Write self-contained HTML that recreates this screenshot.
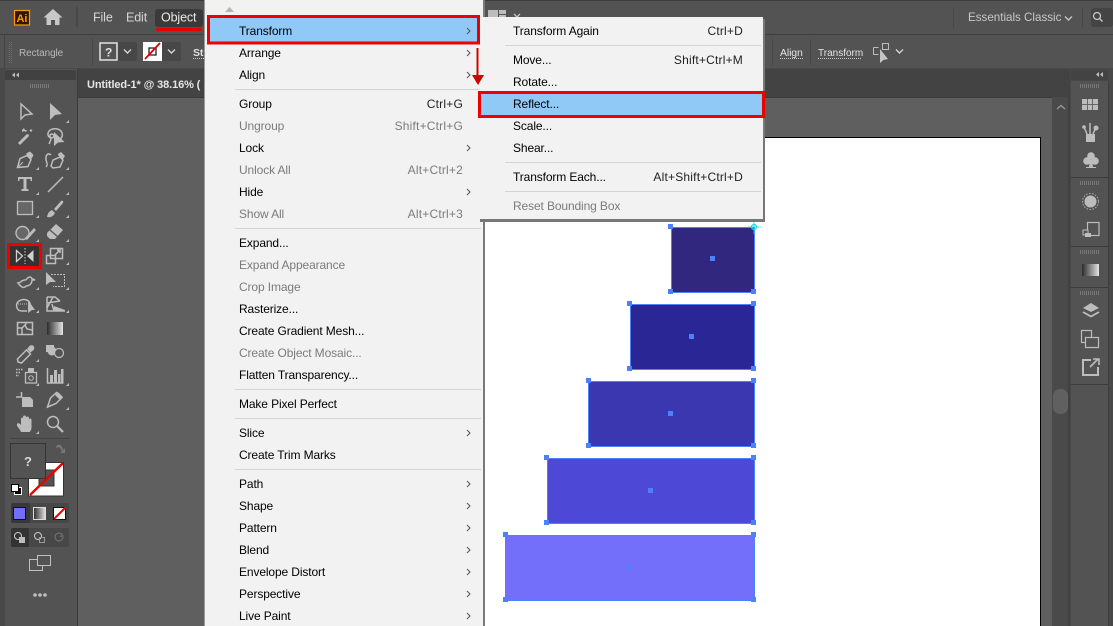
<!DOCTYPE html>
<html><head><meta charset="utf-8"><title>Illustrator Object menu</title>
<style>
html,body{margin:0;padding:0;width:1113px;height:626px;overflow:hidden;background:#535353}
svg{display:block}
text{font-family:"Liberation Sans",sans-serif;font-size:12px;fill:#000;letter-spacing:-.12px}
.g{fill:#7b7b7b}
.r{text-anchor:end;fill:#222;letter-spacing:.2px}
.rg{text-anchor:end;fill:#7b7b7b;letter-spacing:.2px}
.ic{fill:none;stroke:#bdbdbd;stroke-width:1.500}
.f{fill:#bdbdbd;stroke:none}
.h{fill:#4d80fb}
.tri{fill:#bdbdbd}
.ar{fill:none;stroke:#555;stroke-width:1}
</style></head><body>
<svg width="1113" height="626" viewBox="0 0 1113 626" xmlns="http://www.w3.org/2000/svg">
<rect width="1113" height="626" fill="#535353"/>
<rect width="1113" height="1" fill="#3c3c3c"/>
<!-- control bar -->
<rect x="0" y="34" width="1113" height="1" fill="#3f3f3f"/>
<rect x="4" y="35" width="1109" height="33" fill="#535353"/>
<rect x="4" y="35" width="1" height="33" fill="#444"/>
<!-- dark strip -->
<rect x="0" y="68" width="1113" height="558" fill="#484848"/>
<rect x="78" y="69" width="992" height="28" fill="#434343"/>
<rect x="78" y="97" width="975" height="529" fill="#5f5f5f"/>
<rect x="78" y="97" width="975" height="1" fill="#3a3a3a"/>
<rect x="1052" y="97" width="16" height="529" fill="#4a4a4a"/>
<rect x="1068" y="97" width="2" height="529" fill="#404040"/>
<rect x="1053" y="389" width="15" height="25" rx="7" fill="#606060"/>
<path d="M1057 109l4-3.500 4 3.500" fill="none" stroke="#9a9a9a" stroke-width="1.300"/>
<!-- left toolbar -->
<rect x="5" y="69" width="72" height="557" fill="#535353"/>
<rect x="77" y="69" width="1" height="557" fill="#3a3a3a"/>
<rect x="5" y="70" width="71" height="10" fill="#414141"/>
<path d="M15 72.500l-3 2.500 3 2.500zM19 72.500l-3 2.500 3 2.500z" fill="#bdbdbd"/>
<path d="M30.500 84v4M32.500 84v4M34.500 84v4M36.500 84v4M38.500 84v4M40.500 84v4M42.500 84v4M44.500 84v4M46.500 84v4M48.500 84v4" stroke="#7a7a7a" stroke-width="1"/>
<!-- top bar -->
<rect x="14.500" y="10.500" width="15" height="14.500" fill="#2b1700" stroke="#ff9a00" stroke-width="1.200"/>
<text x="16.500" y="22" style="font-size:11px;fill:#ff9a00;font-weight:bold">Ai</text>
<path d="M53 9l-9.500 8.500h3V25h4.500v-5h4v5h4.500v-7.500h3z" fill="#c8c8c8"/>
<rect x="76" y="7" width="2" height="20" fill="#484848"/>
<text x="93" y="21.500" style="fill:#d6d6d6;font-size:12.500px">File</text>
<text x="126" y="21.500" style="fill:#d6d6d6;font-size:12.500px">Edit</text>
<rect x="155" y="9" width="48" height="18" rx="3" fill="#3a3a3a"/>
<text x="161" y="21.500" style="fill:#e8e8e8;font-size:12.500px">Object</text>
<rect x="156" y="28" width="46" height="3" rx="1.500" fill="#e60000"/>
<!-- right of top bar -->
<path d="M488 10h10v7h-10zM499 10h7v4h-7zM499 15h7v2h-7z" fill="#bdbdbd"/>
<path d="M514 14l3 3 3-3" fill="none" stroke="#c4c4c4" stroke-width="1.300"/>
<rect x="953" y="7" width="1" height="21" fill="#484848"/>
<text x="968" y="21" style="fill:#c8c8c8;font-size:11.600px;letter-spacing:0">Essentials Classic</text>
<path d="M1065 16.500l3.500 3.500 3.500-3.500" fill="none" stroke="#c4c4c4" stroke-width="1.400"/>
<rect x="1082" y="7" width="1" height="21" fill="#484848"/>
<rect x="1091" y="8" width="22" height="19" rx="3" fill="#444"/>
<circle cx="1097" cy="16" r="3.500" fill="none" stroke="#c8c8c8" stroke-width="1.300"/>
<path d="M1099.500 18.500l3 3" stroke="#c8c8c8" stroke-width="1.400"/>
<!-- control bar contents -->
<path d="M9.500 42v21M11.500 42v21" stroke="#6f6f6f" stroke-width="1" stroke-dasharray="1 1"/>
<text x="19" y="56" style="fill:#b8b8b8;font-size:10px;letter-spacing:-.1px">Rectangle</text>
<rect x="92" y="38" width="1" height="28" fill="#474747"/>
<rect x="99" y="42" width="38" height="19" rx="2" fill="#474747"/>
<rect x="100" y="43" width="17" height="17" fill="#535353" stroke="#dcdcdc" stroke-width="1.600"/>
<text x="105" y="56.500" style="fill:#e0e0e0;font-size:12px;font-weight:bold">?</text>
<path d="M124 49.500l3.500 3.500 3.500-3.500" fill="none" stroke="#d4d4d4" stroke-width="1.400"/>
<rect x="143" y="42" width="38" height="19" rx="2" fill="#474747"/>
<rect x="143" y="42" width="19" height="19" fill="#fff"/>
<rect x="149" y="48" width="7" height="7" fill="none" stroke="#222" stroke-width="1.300"/>
<path d="M145 59l15-16" stroke="#e60000" stroke-width="1.800"/>
<path d="M168 49.500l3.500 3.500 3.500-3.500" fill="none" stroke="#d4d4d4" stroke-width="1.400"/>
<text x="193" y="56" style="fill:#e0e0e0;font-size:10.500px;font-weight:bold">Str</text>
<path d="M193 58.500h12" stroke="#ccc" stroke-dasharray="1 1"/>
<!-- right of control bar -->
<rect x="772" y="39" width="1" height="26" fill="#474747"/>
<rect x="810" y="39" width="1" height="26" fill="#474747"/>
<text x="780" y="56" style="fill:#e4e4e4;font-size:10.500px">Align</text>
<path d="M780 58.500h23" stroke="#ccc" stroke-dasharray="1 1"/>
<text x="818" y="56" style="fill:#e4e4e4;font-size:10px;letter-spacing:0">Transform</text>
<path d="M818 58.500h44" stroke="#ccc" stroke-dasharray="1 1"/>
<path d="M873.500 47.500h5M873.500 47.500v7h5" fill="none" stroke="#bcbcbc"/>
<rect x="882.500" y="43.500" width="6" height="6" fill="none" stroke="#bcbcbc"/>
<path d="M880 49v14l3.500-3 4.500-1z" fill="#c4c4c4"/>
<path d="M896 49.500l3.500 3.500 3.500-3.500" fill="none" stroke="#d4d4d4" stroke-width="1.400"/>
<!-- tab -->
<text x="87" y="88" style="fill:#e6e6e6;font-size:11px;font-weight:bold">Untitled-1* @ 38.16% (</text>
<!-- artboard -->
<rect x="485" y="137" width="556" height="489" fill="#fff"/>
<rect x="485" y="137" width="556" height="1" fill="#000"/>
<rect x="1040" y="137" width="1" height="489" fill="#000"/>
<!-- rectangles -->
<rect x="671.500" y="227.500" width="83" height="65" fill="#32277e" stroke="#4d80fb" stroke-width="1"/>
<rect x="630.500" y="304.500" width="124" height="65" fill="#2b2695" stroke="#4d80fb" stroke-width="1"/>
<rect x="588.500" y="381.500" width="166" height="65" fill="#3b37b0" stroke="#4d80fb" stroke-width="1"/>
<rect x="547.500" y="458.500" width="207" height="65" fill="#4d48d5" stroke="#4d80fb" stroke-width="1"/>
<rect x="505.500" y="535.500" width="249" height="65" fill="#736ffa" stroke="#4d80fb" stroke-width="1"/>
<g class="h">
<rect x="668" y="224" width="5" height="5"/><rect x="668" y="289" width="5" height="5"/><rect x="751" y="289" width="5" height="5"/><rect x="710" y="256" width="5" height="5"/>
<rect x="627" y="301" width="5" height="5"/><rect x="751" y="301" width="5" height="5"/><rect x="627" y="366" width="5" height="5"/><rect x="751" y="366" width="5" height="5"/><rect x="689" y="334" width="5" height="5"/>
<rect x="586" y="378" width="5" height="5"/><rect x="751" y="378" width="5" height="5"/><rect x="586" y="443" width="5" height="5"/><rect x="751" y="443" width="5" height="5"/><rect x="668" y="411" width="5" height="5"/>
<rect x="544" y="455" width="5" height="5"/><rect x="751" y="455" width="5" height="5"/><rect x="544" y="520" width="5" height="5"/><rect x="751" y="520" width="5" height="5"/><rect x="648" y="488" width="5" height="5"/>
<rect x="503" y="532" width="5" height="5"/><rect x="751" y="532" width="5" height="5"/><rect x="503" y="597" width="5" height="5"/><rect x="751" y="597" width="5" height="5"/><rect x="627" y="565" width="5" height="5"/>
</g>
<circle cx="754" cy="227" r="2.500" fill="none" stroke="#19d9ee" stroke-width="1.200"/>
<path d="M748 227h13M754 221v13" stroke="#19d9ee" stroke-width=".8"/>
<!-- tool icons -->
<path class="ic" d="M21 104v15l4-4 7-1z"/>
<path class="f" d="M50 103v17l5-5 7-1z"/>
<path d="M19 144l9-9" stroke="#bdbdbd" stroke-width="3"/>
<path class="f" d="M24 128l1 2 2 0-1 2-2-1-2 1 0-2zM31 129l1.500 1.500-1.500 1.500-1.500-1.500zM28 134l1 1-1 1-1-1z"/>
<path class="ic" d="M60 139c3-2 3-5 1-8-3-3-9-3-12 0-2 3-1 6 2 7M51 138c3 0 4-3 1-4-2 0-3 2-1 4 0 2-1 4-2 6"/>
<path class="f" d="M54 132v14l4-3.500 6.500-.5z"/>
<path class="ic" d="M17.500 167.500l2.500-9 7-3 4 4-3 7z"/>
<path class="f" d="M27 153l3-1.500 3.500 3.500-1.500 3-1 1-5-5z"/>
<path d="M18 167l5-5" stroke="#bdbdbd"/>
<path class="ic" d="M46 167c3-3-1-6 0-10 .5-3 3-4 5-2M51 166l2-6 7-3 3 3-3 7-7 1z"/>
<path class="f" d="M58 154l3-2 4 4-2 3-1 0-4-4z"/>
<path class="f" d="M18 177h14v4h-1.500v-2h-4v10h2v2h-7v-2h2v-10h-4v2H18z"/>
<path class="ic" d="M48 192l15-15"/>
<rect x="17.500" y="201.500" width="15" height="13" fill="#676767" stroke="#bdbdbd" stroke-width="1.300"/>
<path class="f" d="M47 217c1-5 3-6 5-7l3 3c-1 2-3 5-8 4zM54 209l7-8c1-1 3 0 2 2l-7 8z"/>
<circle cx="22.500" cy="233" r="6.500" fill="#676767" stroke="#bdbdbd" stroke-width="1.400"/>
<path class="f" d="M25 238l9-10 2 2-9 10z"/>
<path class="f" d="M47 233l9-9 7 6-8 9h-5l-3-3z"/>
<path d="M50 230l8 7" stroke="#535353" stroke-width="1.200"/>
<!-- reflect highlighted -->
<rect x="8.500" y="244.500" width="32" height="23" fill="#333" stroke="#ef0000" stroke-width="3"/>
<path d="M16.500 250.500v11l6-5.500z" fill="none" stroke="#d0d0d0" stroke-width="1.300"/>
<path d="M33.500 250v12l-6.500-6z" fill="#d0d0d0"/>
<path d="M25 248v16" stroke="#d0d0d0" stroke-dasharray="1.500 1.500"/>
<rect x="46.500" y="255.500" width="9" height="8" class="ic" stroke-width="1.200"/>
<rect x="50.500" y="248.500" width="12" height="10" class="ic" stroke-width="1.200"/>
<path class="ic" d="M55 255l5-5M57 250h3v3" stroke-width="1.200"/>
<path class="ic" d="M18 283c3 0 3-3 7-3 2 0 2-3 5-3 2 0 1 2 3 2l2 1-3 0c0 4-3 6-6 6-2 3-5 1-8-3z" stroke-width="1.200"/>
<path class="f" d="M46 272v13l4-3h6z"/>
<path d="M51 274.500h13.500v12H53" fill="none" stroke="#bdbdbd" stroke-dasharray="2 1"/>
<path class="ic" d="M27 311H22c-6 0-7-7-3-10 5-3 12-1 11 5" stroke-width="1.300"/>
<path class="f" d="M28 300v13l4-3h3z"/>
<path d="M18 304h9" stroke="#bdbdbd" stroke-dasharray="1 1"/>
<path class="ic" d="M47 297h8l5 4M47 297v14h18M47 303l13-2M47 308l6-11M52 304l2 7" stroke-width="1"/>
<path class="f" d="M54 306l11 4v1H54z"/>
<rect x="17.500" y="322.500" width="15" height="12" class="ic" stroke-width="1.200"/>
<path class="ic" d="M18 328h4l3-3 2-3M25 325l2 4 5 1M22 328l0 7" stroke-width="1"/>
<defs><linearGradient id="g1"><stop offset="0" stop-color="#2c2c2c"/><stop offset="1" stop-color="#e4e4e4"/></linearGradient></defs>
<rect x="47" y="322" width="16" height="13" fill="url(#g1)"/>
<path class="ic" d="M18 362l-.5-3 9-9 4 4-9 9z" stroke-width="1.300"/>
<path class="f" d="M27 349l2.500-3c1-1 3-1 4 0s1 3 0 4l-3 2.500z"/>
<rect x="46" y="345" width="8" height="7" class="f"/>
<circle cx="52" cy="351" r="4.500" class="f"/>
<circle cx="59" cy="353" r="4.500" fill="#535353" stroke="#bdbdbd" stroke-width="1.300"/>
<path d="M16 369.500h7M16 372.500h5M16 375.500h3" stroke="#bdbdbd" stroke-width="1.500" stroke-dasharray="1.500 1"/>
<rect x="25.500" y="372.500" width="11" height="10.500" fill="none" stroke="#bdbdbd" stroke-width="1.300"/>
<rect x="28" y="368" width="6" height="4" class="f"/>
<circle cx="31" cy="378" r="2.300" fill="none" stroke="#bdbdbd"/>
<path class="ic" d="M47.500 368v15h16" stroke-width="1.200"/>
<rect x="50" y="375" width="3" height="8" class="f"/><rect x="54" y="370" width="3" height="13" class="f"/><rect x="58" y="374" width="2.500" height="9" class="f"/><rect x="61" y="369" width="2.500" height="14" class="f"/>
<path class="ic" d="M16 397h6M21.500 392v5" stroke-width="1"/>
<path class="f" d="M22 397h8l3 3v7H22z"/>
<path class="ic" d="M47.500 407l3-9 6-5.500 5.500 5-6 6z" stroke-width="1.400"/>
<path d="M58 392l5 5-3 3-5-5z" fill="#bdbdbd"/>
<path class="f" d="M21 432c-1-3-5-6-4-8s3 0 4 1v-6c0-2 2-2 2 0v2-4c0-2 3-2 3 0v4-3c0-2 3-2 3 0v4-2c0-2 2.500-2 2.500 0v7c0 3-1 4-2 5z"/>
<circle cx="53" cy="422" r="5.500" fill="none" stroke="#bdbdbd" stroke-width="1.500"/>
<path d="M57 426l6 6" stroke="#bdbdbd" stroke-width="2.200"/>
<g class="tri">
<path d="M69 123v-3l-3 3zM39 170v-3l-3 3zM69 170v-3l-3 3zM39 195v-3l-3 3zM69 195v-3l-3 3zM39 218v-3l-3 3zM69 218v-3l-3 3zM39 242v-3l-3 3zM69 242v-3l-3 3zM69 265v-3l-3 3zM39 290v-3l-3 3zM69 290v-3l-3 3zM39 313v-3l-3 3zM69 313v-3l-3 3zM39 362v-3l-3 3zM39 386v-3l-3 3zM69 386v-3l-3 3zM69 410v-3l-3 3zM39 434v-3l-3 3z"/>
</g>
<rect x="10" y="438" width="60" height="1" fill="#444"/>
<!-- fill / stroke -->
<path d="M56 447c1-3 5-3 6 0l1 3 2-2v5h-5l2-2-2-3c-1-1-2-1-3 0z" fill="#777"/>
<rect x="28.500" y="462.500" width="35" height="33.500" fill="#fff" stroke="#333"/>
<rect x="39" y="470" width="15" height="16" fill="#535353" stroke="#333"/>
<path d="M30 495l33-32" stroke="#ee0000" stroke-width="2.400"/>
<rect x="10.500" y="443.500" width="35" height="35" fill="#535353" stroke="#333"/>
<text x="24" y="466" style="font-size:13px;font-weight:bold;fill:#d8d8d8">?</text>
<rect x="14.500" y="487.500" width="7" height="7" fill="#000" stroke="#fff"/>
<rect x="11.500" y="484.500" width="7" height="7" fill="#fff" stroke="#000"/>
<!-- color buttons -->
<rect x="11" y="503" width="58" height="20" rx="2" fill="#474747"/>
<rect x="11" y="503" width="19" height="20" rx="2" fill="#383838"/>
<rect x="13.500" y="507.500" width="12" height="12" fill="#726ffa" stroke="#111"/>
<rect x="33.500" y="507.500" width="12" height="12" fill="url(#g1)" stroke="#ddd"/>
<rect x="53.500" y="507.500" width="12" height="12" fill="#fff" stroke="#111"/>
<path d="M54 519l12-12" stroke="#ee0000" stroke-width="2"/>
<rect x="11" y="528" width="58" height="19" rx="2" fill="#474747"/>
<rect x="11" y="528" width="18" height="19" rx="2" fill="#333"/>
<circle cx="18" cy="536" r="3.500" fill="none" stroke="#ccc"/><rect x="19" y="537" width="6" height="6" class="f"/>
<circle cx="38" cy="536" r="3.500" fill="none" stroke="#ccc"/><rect x="39.500" y="537.500" width="5" height="5" fill="none" stroke="#999"/>
<circle cx="59" cy="537" r="4" fill="none" stroke="#777"/><path d="M59 537h4v-4z" fill="#666"/>
<rect x="29.500" y="559.500" width="13" height="11" fill="#535353" stroke="#c0c0c0"/>
<rect x="37.500" y="555.500" width="13" height="10" fill="#535353" stroke="#c0c0c0"/>
<circle cx="35" cy="595" r="1.800" class="f"/><circle cx="40" cy="595" r="1.800" class="f"/><circle cx="45" cy="595" r="1.800" class="f"/>
<!-- right panel -->
<rect x="1070" y="69" width="43" height="557" fill="#484848"/>
<rect x="1071" y="70" width="37" height="10" fill="#434343"/>
<path d="M1099 72l-3 2.500 3 2.500zM1103 72l-3 2.500 3 2.500z" fill="#c0c0c0"/>
<rect x="1071" y="81" width="37" height="545" fill="#535353"/>
<rect x="1108" y="81" width="1" height="545" fill="#3c3c3c"/>
<rect x="1071" y="177" width="37" height="1" fill="#3c3c3c"/>
<rect x="1071" y="246" width="37" height="1" fill="#3c3c3c"/>
<rect x="1071" y="287" width="37" height="1" fill="#3c3c3c"/>
<rect x="1071" y="384" width="37" height="1" fill="#3c3c3c"/>
<path d="M1080.500 84v4M1082.500 84v4M1084.500 84v4M1086.500 84v4M1088.500 84v4M1090.500 84v4M1092.500 84v4M1094.500 84v4M1096.500 84v4M1098.500 84v4M1080.500 181v4M1082.500 181v4M1084.500 181v4M1086.500 181v4M1088.500 181v4M1090.500 181v4M1092.500 181v4M1094.500 181v4M1096.500 181v4M1098.500 181v4M1080.500 250v4M1082.500 250v4M1084.500 250v4M1086.500 250v4M1088.500 250v4M1090.500 250v4M1092.500 250v4M1094.500 250v4M1096.500 250v4M1098.500 250v4M1080.500 291v4M1082.500 291v4M1084.500 291v4M1086.500 291v4M1088.500 291v4M1090.500 291v4M1092.500 291v4M1094.500 291v4M1096.500 291v4M1098.500 291v4" stroke="#777" stroke-width="1"/>
<rect x="1082" y="99" width="16" height="11" fill="#bdbdbd"/>
<path d="M1082 104.500h16M1087.500 99v11M1092.500 99v11" stroke="#666"/>
<rect x="1086" y="134" width="9" height="8" class="f"/>
<path d="M1087 134l-3-7M1090 134v-11M1093 134l3-7" stroke="#bdbdbd" stroke-width="1.500"/>
<circle cx="1084" cy="127" r="1.800" class="f"/><circle cx="1096" cy="128" r="2.500" class="f"/>
<circle cx="1091" cy="156" r="3.800" class="f"/><circle cx="1087" cy="161" r="3.800" class="f"/><circle cx="1095" cy="161" r="3.800" class="f"/>
<path class="f" d="M1090 160h2l1 7h3v1h-10v-1h3z"/>
<circle cx="1090.500" cy="201.500" r="6" class="f"/>
<circle cx="1090.500" cy="201.500" r="8" fill="none" stroke="#b0b0b0" stroke-dasharray="1.500 1.500"/>
<rect x="1087.500" y="222.500" width="11.500" height="13" fill="none" stroke="#bdbdbd" stroke-width="1.200"/>
<rect x="1083" y="230" width="5" height="5" fill="#535353" stroke="#bdbdbd"/>
<rect x="1085" y="233" width="6" height="4" class="f"/>
<rect x="1082" y="264" width="17" height="12" fill="url(#g1)"/>
<path class="f" d="M1091 303l8 5-8 4-8-4z"/>
<path d="M1083 312l8 4.500 8-4.500" fill="none" stroke="#bdbdbd" stroke-width="1.800"/>
<rect x="1081.500" y="330.500" width="10" height="12" fill="#535353" stroke="#bdbdbd" stroke-width="1.200"/>
<rect x="1085.500" y="337.500" width="13" height="10" fill="#535353" stroke="#bdbdbd" stroke-width="1.200"/>
<path d="M1091 360h-8v15h15v-8" fill="none" stroke="#bdbdbd" stroke-width="2"/>
<path d="M1090 367l8-8M1093 359h6v6" fill="none" stroke="#bdbdbd" stroke-width="1.600"/>
<!-- main menu -->
<rect x="483" y="0" width="2" height="626" fill="#7a7a7a"/>
<rect x="205" y="0" width="278" height="626" fill="#f2f2f2"/>
<rect x="204" y="0" width="1" height="626" fill="#9a9a9a"/>
<path d="M225 12l4.500-5 4.500 5z" fill="#b5b5b5"/>
<rect x="235" y="89" width="246" height="1" fill="#d4d4d4"/>
<rect x="235" y="228" width="246" height="1" fill="#d4d4d4"/>
<rect x="235" y="389" width="246" height="1" fill="#d4d4d4"/>
<rect x="235" y="418" width="246" height="1" fill="#d4d4d4"/>
<rect x="235" y="469" width="246" height="1" fill="#d4d4d4"/>
<text x="239" y="57">Arrange</text>
<text x="239" y="79">Align</text>
<text x="239" y="108">Group</text><text x="463" y="108" class="r">Ctrl+G</text>
<text x="239" y="130" class="g">Ungroup</text><text x="463" y="130" class="rg">Shift+Ctrl+G</text>
<text x="239" y="152">Lock</text>
<text x="239" y="174" class="g">Unlock All</text><text x="463" y="174" class="rg">Alt+Ctrl+2</text>
<text x="239" y="196">Hide</text>
<text x="239" y="218" class="g">Show All</text><text x="463" y="218" class="rg">Alt+Ctrl+3</text>
<text x="239" y="247">Expand...</text>
<text x="239" y="269" class="g">Expand Appearance</text>
<text x="239" y="291" class="g">Crop Image</text>
<text x="239" y="313">Rasterize...</text>
<text x="239" y="335">Create Gradient Mesh...</text>
<text x="239" y="357" class="g">Create Object Mosaic...</text>
<text x="239" y="379">Flatten Transparency...</text>
<text x="239" y="408">Make Pixel Perfect</text>
<text x="239" y="437">Slice</text>
<text x="239" y="459">Create Trim Marks</text>
<text x="239" y="488">Path</text>
<text x="239" y="510">Shape</text>
<text x="239" y="532">Pattern</text>
<text x="239" y="554">Blend</text>
<text x="239" y="576">Envelope Distort</text>
<text x="239" y="598">Perspective</text>
<text x="239" y="620">Live Paint</text>
<path class="ar" d="M467 50l3 3-3 3M467 72l3 3-3 3M467 145l3 3-3 3M467 189l3 3-3 3M467 430l3 3-3 3M467 481l3 3-3 3M467 503l3 3-3 3M467 525l3 3-3 3M467 547l3 3-3 3M467 569l3 3-3 3M467 591l3 3-3 3M467 613l3 3-3 3"/>
<!-- submenu -->
<rect x="480" y="19" width="285" height="203" fill="#777"/>
<rect x="479" y="17" width="284" height="202" fill="#f2f2f2"/>
<rect x="505" y="45" width="256" height="1" fill="#d4d4d4"/>
<rect x="505" y="162" width="256" height="1" fill="#d4d4d4"/>
<rect x="505" y="191" width="256" height="1" fill="#d4d4d4"/>
<rect x="479" y="93" width="285" height="23" fill="#90c8f6"/>
<rect x="479.500" y="92.500" width="284" height="24" fill="none" stroke="#ee0000" stroke-width="3"/>
<text x="513" y="35">Transform Again</text><text x="743" y="35" class="r">Ctrl+D</text>
<text x="513" y="64">Move...</text><text x="743" y="64" class="r">Shift+Ctrl+M</text>
<text x="513" y="86">Rotate...</text>
<text x="513" y="108">Reflect...</text>
<text x="513" y="130">Scale...</text>
<text x="513" y="152">Shear...</text>
<text x="513" y="181">Transform Each...</text><text x="743" y="181" class="r">Alt+Shift+Ctrl+D</text>
<text x="513" y="210" class="g">Reset Bounding Box</text>
<!-- transform row -->
<rect x="209" y="17" width="269" height="25" fill="#90c8f6"/>
<rect x="208.500" y="16.500" width="270" height="26.500" fill="none" stroke="#ee0000" stroke-width="3"/>
<text x="239" y="35">Transform</text>
<path class="ar" d="M467 28l3 3-3 3"/>
<!-- red arrow -->
<path d="M477.500 48v28" stroke="#d40000" stroke-width="2"/>
<path d="M472 75h12l-6 10z" fill="#d40000"/>
</svg>
</body></html>
